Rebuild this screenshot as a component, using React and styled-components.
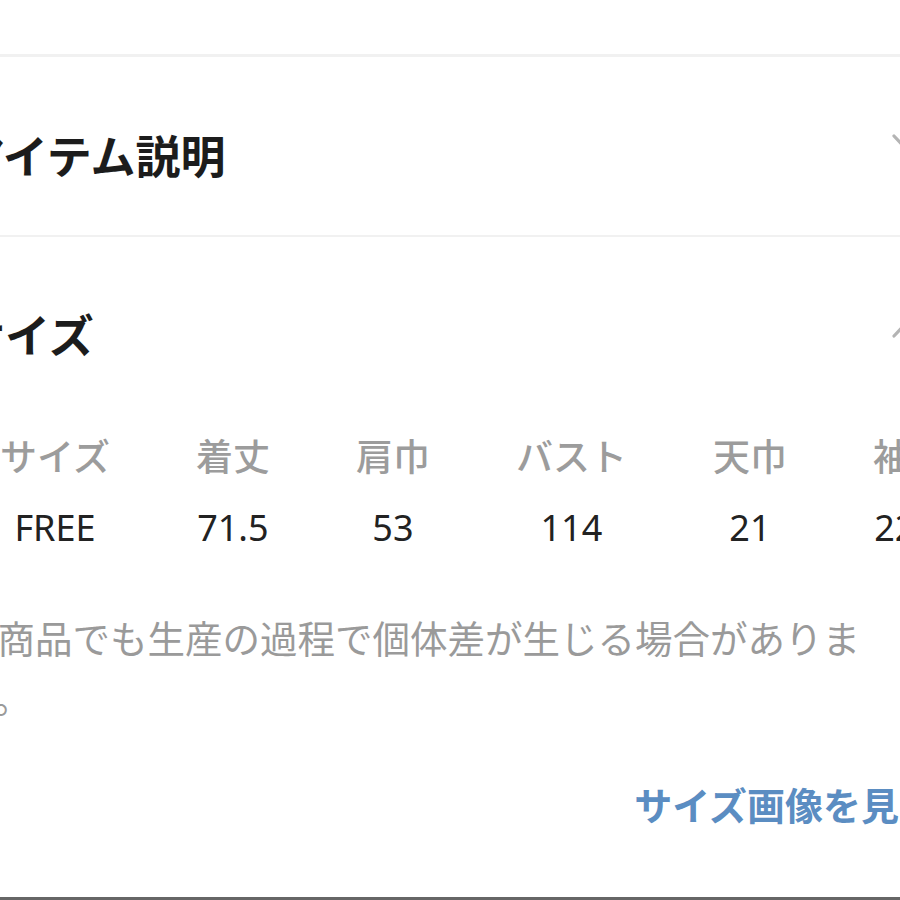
import React from "react";
import styled, { createGlobalStyle } from "styled-components";

const GlobalStyle = createGlobalStyle`
  html, body {
    margin: 0;
    padding: 0;
    background: #ffffff;
    overflow: hidden;
  }
  body {
    font-family: "Noto Sans CJK JP", "Noto Sans", sans-serif;
  }
`;

const sizeHeaders = ["サイズ", "着丈", "肩巾", "バスト", "天巾", "袖丈"];
const sizeValues = ["FREE", "71.5", "53", "114", "21", "22.5"];

export default function App() {
  return (
    <>
      <GlobalStyle />
      <Page>
        <TopSpace />
        <Divider $thick={3} />
        <AccordionRow $top={75} $bottom={58}>
          <SectionTitle>アイテム説明</SectionTitle>
          <Chevron $offset={1} />
        </AccordionRow>
        <Divider $thick={2} />
        <AccordionRow $top={74} $bottom={0}>
          <SectionTitle>サイズ</SectionTitle>
          <Chevron up $offset={8} />
        </AccordionRow>
        <SizeTable>
          {sizeHeaders.map((h) => (
            <HeadCell key={h}>{h}</HeadCell>
          ))}
          {sizeValues.map((v, i) => (
            <ValueCell key={i}>{v}</ValueCell>
          ))}
        </SizeTable>
        <Note>同商品でも生産の過程で個体差が生じる場合があります。</Note>
        <LinkRow>
          <SizeLink href="#">サイズ画像を見る</SizeLink>
        </LinkRow>
        <BottomBar />
      </Page>
    </>
  );
}

const Chevron = ({ up, $offset }) => (
  <ChevronIcon
    $offset={$offset}
    viewBox="0 0 32 20"
    width="32"
    height="20"
    fill="none"
  >
    <path
      d={up ? "M3 17 L16 3 L29 17" : "M3 3 L16 17 L29 3"}
      stroke="#b4b4b4"
      strokeWidth="3.2"
      strokeLinecap="round"
      strokeLinejoin="round"
    />
  </ChevronIcon>
);

const Page = styled.div`
  width: 980px;
  margin-left: -40px;
  display: flex;
  flex-direction: column;
`;

const TopSpace = styled.div`
  height: 54px;
`;

const Divider = styled.div`
  height: ${(p) => p.$thick}px;
  background: #f1f1f1;
`;

const AccordionRow = styled.div`
  display: flex;
  justify-content: space-between;
  align-items: flex-start;
  padding: ${(p) => p.$top}px 17px ${(p) => p.$bottom}px 0;
`;

const SectionTitle = styled.h2`
  margin: 0;
  font-family: "Noto Sans CJK JP", sans-serif;
  font-weight: 700;
  font-size: 45px;
  line-height: 45px;
  color: #1c1c1c;
`;

const ChevronIcon = styled.svg`
  display: block;
  margin-top: ${(p) => p.$offset}px;
`;

const SizeTable = styled.div`
  display: grid;
  grid-template-columns: repeat(6, max-content);
  column-gap: 86px;
  row-gap: 35px;
  justify-items: center;
  margin-top: 81px;
  padding-left: 40px;
`;

const HeadCell = styled.div`
  font-family: "Noto Sans CJK JP", sans-serif;
  font-weight: 500;
  font-size: 37px;
  line-height: 37px;
  color: #9c9c9c;
  white-space: nowrap;
`;

const ValueCell = styled.div`
  font-family: "Noto Sans", "Noto Sans CJK JP", sans-serif;
  font-weight: 400;
  font-size: 36px;
  line-height: 37px;
  color: #222222;
  white-space: nowrap;
`;

const Note = styled.p`
  margin: 61px 0 0;
  max-width: 910px;
  font-family: "Noto Sans CJK JP", sans-serif;
  font-weight: 400;
  font-size: 37.5px;
  line-height: 60px;
  color: #9a9a9a;
`;

const LinkRow = styled.div`
  display: flex;
  justify-content: flex-end;
  margin-top: 58px;
  padding-right: 3px;
`;

const SizeLink = styled.a`
  font-family: "Noto Sans CJK JP", sans-serif;
  font-weight: 700;
  font-size: 38px;
  line-height: 37px;
  color: #5b8dc2;
  text-decoration: none;
`;

const BottomBar = styled.div`
  margin-top: 75px;
  height: 3px;
  background: #666666;
`;
